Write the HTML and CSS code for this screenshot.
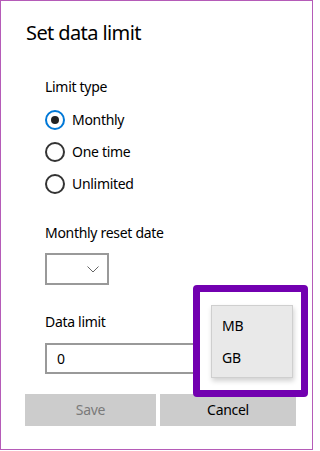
FILE: index.html
```html
<!DOCTYPE html>
<html lang="en">
<head>
<meta charset="utf-8">
<title>Set data limit</title>
<link rel="stylesheet" href="styles.css">
</head>
<body>
<div class="window">
  <h1 class="title">Set data limit</h1>
  <div class="section">
    <div class="label label-type">Limit type</div>
    <div class="radios">
      <div class="radio-row"><span class="radio checked"></span><span class="radio-text">Monthly</span></div>
      <div class="radio-row"><span class="radio"></span><span class="radio-text">One time</span></div>
      <div class="radio-row"><span class="radio"></span><span class="radio-text">Unlimited</span></div>
    </div>
    <div class="label label-reset">Monthly reset date</div>
    <div class="select">
      <svg class="chevron" width="12" height="7" viewBox="0 0 12 7"><path d="M0.5 0.5 L6 6 L11.5 0.5" fill="none" stroke="#666" stroke-width="1"/></svg>
    </div>
    <div class="label label-data">Data limit</div>
    <div class="input">0</div>
  </div>
  <div class="buttons">
    <div class="btn btn-save">Save</div>
    <div class="btn btn-cancel">Cancel</div>
  </div>
  <div class="highlight">
    <div class="menu">
      <div class="menu-item">MB</div>
      <div class="menu-item">GB</div>
    </div>
  </div>
</div>
</body>
</html>
```

FILE: styles.css
```css
html, body {
  margin: 0;
  padding: 0;
  background: #ffffff;
}
body {
  font-family: "Noto Sans", "Open Sans", sans-serif;
  color: #111111;
}
.window {
  position: relative;
  width: 313px;
  height: 450px;
  box-sizing: border-box;
  border: 1px solid #b55bb8;
  padding: 18px 0 0 24px;
  background: #ffffff;
}
.title {
  margin: 0;
  padding-left: 1px;
  font-size: 20px;
  font-weight: 400;
  line-height: 28px;
  height: 28px;
  letter-spacing: -0.6px;
  color: #000000;
}
.section {
  padding-left: 20px;
}
.label {
  font-size: 14px;
  line-height: 20px;
  height: 20px;
  letter-spacing: -0.3px;
  color: #000000;
}
.label-type {
  margin-top: 30px;
}
.radios {
  margin-top: 7px;
  display: flex;
  flex-direction: column;
}
.radio-row {
  height: 32px;
  display: flex;
  align-items: center;
  gap: 7px;
}
.radio {
  width: 20px;
  height: 20px;
  box-sizing: border-box;
  border: 2px solid #333333;
  border-radius: 50%;
  display: flex;
  align-items: center;
  justify-content: center;
}
.radio.checked {
  border-color: #0078d7;
}
.radio.checked::after {
  content: "";
  width: 8px;
  height: 8px;
  border-radius: 50%;
  background: #222222;
}
.radio-text {
  font-size: 14px;
  line-height: 32px;
  letter-spacing: -0.3px;
  color: #000000;
}
.label-reset {
  margin-top: 23px;
}
.select {
  margin-top: 10px;
  width: 64px;
  height: 32px;
  box-sizing: border-box;
  border: 2px solid #999999;
  display: flex;
  align-items: center;
  justify-content: flex-end;
  padding-right: 8px;
}
.chevron {
  display: block;
}
.label-data {
  margin-top: 27px;
}
.input {
  margin-top: 11px;
  width: 200px;
  height: 31px;
  box-sizing: border-box;
  border: 2px solid #999999;
  padding-left: 10px;
  font-size: 14px;
  line-height: 27px;
  color: #000000;
}
.buttons {
  margin-top: 20px;
  display: grid;
  grid-template-columns: 131px 136px;
  column-gap: 4px;
}
.btn {
  height: 32px;
  background: #cccccc;
  font-size: 14px;
  line-height: 31px;
  text-align: center;
  letter-spacing: -0.3px;
}
.btn-save {
  color: #7a7a7a;
}
.btn-cancel {
  color: #000000;
}
.highlight {
  position: absolute;
  left: 192px;
  top: 284px;
  width: 115px;
  height: 112px;
  box-sizing: border-box;
  border: 7px solid #7200b0;
  border-radius: 4px;
  background: #ffffff;
}
.menu {
  position: absolute;
  left: 11px;
  top: 13px;
  width: 82px;
  height: 73px;
  box-sizing: border-box;
  border: 1px solid #cfcfcf;
  background: #e9e9e9;
  padding: 4px 0 0 10px;
  box-shadow: 1px 3px 5px rgba(0, 0, 0, 0.18);
}
.menu-item {
  height: 32px;
  font-size: 14px;
  line-height: 32px;
  color: #000000;
  letter-spacing: -0.2px;
}
```
